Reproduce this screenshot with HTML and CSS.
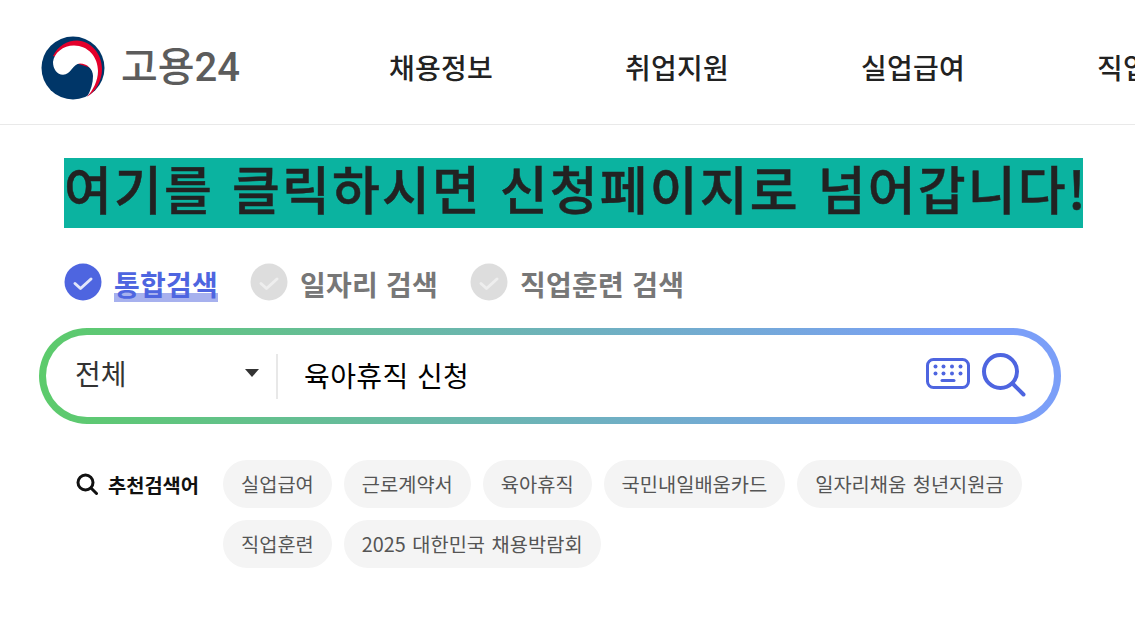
FILE: index.html
```html
<!DOCTYPE html>
<html lang="ko">
<head>
  <meta charset="UTF-8">
  <meta name="viewport" content="width=device-width, initial-scale=1.0">
  <title>고용24</title>
  <link rel="stylesheet" href="styles.css">
</head>
<body>
  <header class="site-header">
    <a class="logo" href="#">
      <svg class="logo-mark" viewBox="0 0 64 64" aria-hidden="true">
        <circle cx="32" cy="32" r="31.500" fill="#003668"/>
        <path fill="#e4002b" d="M12 20C17 10 26 4.500 36 4.500C50 5 61 18 61 33C61 45 55 55 46 61C52 52 57 44 57 34Z"/>
        <path fill="#fff" d="M12 26C13 17 22 9.500 33 9.500C47 9.500 57 21 57 35C57 45 52 54 46 61C50 54 52 47 52 40C52 33 46 27.500 39 27.500C32 27.500 30 38.700 22 38.700C16 38.700 12 33 12 26Z"/>
      </svg>
      <span class="logo-text">고용24</span>
    </a>
    <nav class="main-nav">
      <a href="#">채용정보</a>
      <a href="#">취업지원</a>
      <a href="#">실업급여</a>
      <a href="#">직업능력개발</a>
    </nav>
  </header>

  <main class="content">
    <a class="banner" href="#">여기를 클릭하시면 신청페이지로 넘어갑니다!</a>

    <div class="search-types">
      <div class="search-type active">
        <svg class="check" viewBox="0 0 38 38" aria-hidden="true">
          <circle cx="19" cy="19" r="18.500"/>
          <path d="M11 20.500l5.500 5 10.500-9.500"/>
        </svg>
        <span>통합검색</span>
      </div>
      <div class="search-type">
        <svg class="check" viewBox="0 0 38 38" aria-hidden="true">
          <circle cx="19" cy="19" r="18.500"/>
          <path d="M11 20.500l5.500 5 10.500-9.500"/>
        </svg>
        <span>일자리 검색</span>
      </div>
      <div class="search-type">
        <svg class="check" viewBox="0 0 38 38" aria-hidden="true">
          <circle cx="19" cy="19" r="18.500"/>
          <path d="M11 20.500l5.500 5 10.500-9.500"/>
        </svg>
        <span>직업훈련 검색</span>
      </div>
    </div>

    <div class="search-box">
      <div class="search-inner">
        <div class="category">
          <span>전체</span>
          <i class="arrow"></i>
        </div>
        <div class="query">육아휴직 신청</div>
        <svg class="icon-keyboard" viewBox="0 0 44 32" aria-hidden="true">
          <rect x="1.500" y="1.500" width="41" height="28" rx="6"/>
          <g class="keys">
            <circle cx="9.500" cy="8.500" r="2"/><circle cx="17.500" cy="8.500" r="2"/><circle cx="26" cy="8.500" r="2"/><circle cx="34.500" cy="8.500" r="2"/>
            <circle cx="9.500" cy="15.500" r="2"/><circle cx="17.500" cy="15.500" r="2"/><circle cx="26" cy="15.500" r="2"/><circle cx="34.500" cy="15.500" r="2"/>
          </g>
          <path d="M16 22.500h12"/>
        </svg>
        <svg class="icon-search" viewBox="0 0 44 44" aria-hidden="true">
          <circle cx="18.500" cy="18.500" r="16.500"/>
          <path d="M30.500 30.500L41.500 41.500"/>
        </svg>
      </div>
    </div>

    <div class="recommend">
      <div class="recommend-title">
        <svg viewBox="0 0 22 22" aria-hidden="true">
          <circle cx="9.500" cy="9.500" r="7.500"/>
          <path d="M15 15l5.500 5.500"/>
        </svg>
        <strong>추천검색어</strong>
      </div>
      <ul class="keywords">
        <li>실업급여</li>
        <li>근로계약서</li>
        <li>육아휴직</li>
        <li>국민내일배움카드</li>
        <li>일자리채움 청년지원금</li>
        <li>직업훈련</li>
        <li>2025 대한민국 채용박람회</li>
      </ul>
    </div>
  </main>
</body>
</html>
```

FILE: styles.css
```css
html, body {
  height: 100%;
}

body {
  margin: 0;
  overflow: hidden;
  background: #fff;
  color: #222;
  font-family: "Noto Sans CJK KR", "Noto Sans", sans-serif;
}

a {
  color: inherit;
  text-decoration: none;
}

.site-header {
  display: flex;
  align-items: center;
  height: 125px;
  padding: 12px 0 0 41px;
  box-sizing: border-box;
  border-bottom: 1px solid #e9e9e9;
  white-space: nowrap;
}

.logo {
  display: flex;
  align-items: center;
  gap: 16px;
  width: 348px;
  flex-shrink: 0;
}

.logo-mark {
  width: 64px;
  height: 64px;
}

.logo-text {
  color: #5c5c5c;
  font-family: Roboto, "Noto Sans CJK KR", sans-serif;
  font-size: 40px;
  font-weight: 500;
  line-height: 1;
}

.main-nav {
  display: flex;
  gap: 132px;
  padding-bottom: 2px;
  font-size: 28px;
  font-weight: 500;
  letter-spacing: 0.24px;
}

.content {
  padding: 33px 0 0 39px;
}

.banner {
  display: block;
  width: 1019px;
  height: 70px;
  margin-left: 25px;
  background: #0bb3a0;
  color: #222;
  font-size: 52px;
  font-weight: 500;
  letter-spacing: 2.16px;
  word-spacing: 1.2px;
  line-height: 60px;
  white-space: nowrap;
  -webkit-text-stroke: 0.5px #222;
}

.search-types {
  display: flex;
  gap: 32px;
  margin: 35px 0 0 25px;
}

.search-type {
  display: flex;
  align-items: flex-start;
  gap: 12px;
  color: #777;
  font-size: 28px;
  font-weight: 700;
  letter-spacing: 0.24px;
  line-height: 36px;
}

.search-type span {
  padding-top: 3px;
}

.check {
  width: 38px;
  height: 38px;
}

.check circle {
  fill: #ddd;
}

.check path {
  fill: none;
  stroke: #eee;
  stroke-width: 3;
  stroke-linecap: round;
  stroke-linejoin: round;
}

.search-type.active {
  color: #4e65e0;
}

.search-type.active .check circle {
  fill: #4e65e0;
}

.search-type.active .check path {
  stroke: #e2e6fa;
}

.search-type.active span {
  background: linear-gradient(#a7b1ee, #a7b1ee) no-repeat 0 100% / 100% 9px;
}

.search-box {
  width: 1022px;
  height: 96px;
  margin-top: 26px;
  padding: 7px;
  box-sizing: border-box;
  border-radius: 48px;
  background: linear-gradient(90deg, #5ccb6b, #7b9ff8 90%);
}

.search-inner {
  display: flex;
  align-items: center;
  height: 100%;
  padding: 0 28px 0 29px;
  border-radius: 41px;
  background: #fff;
}

.category {
  display: flex;
  align-items: center;
  justify-content: space-between;
  width: 203px;
  height: 45px;
  padding: 0 17px 6px 0;
  box-sizing: border-box;
  border-right: 2px solid #e8e8e8;
  color: #333;
  font-size: 28px;
}

.arrow {
  width: 0;
  height: 0;
  border-top: 8px solid #333;
  border-left: 7px solid transparent;
  border-right: 7px solid transparent;
}

.query {
  flex: 1;
  padding: 0 0 2px 26px;
  color: #000;
  font-size: 28px;
  letter-spacing: 0.4px;
}

.icon-keyboard {
  width: 44px;
  height: 32px;
  margin: 0 12px 5px 0;
  fill: none;
  stroke: #4e65e0;
  stroke-width: 3;
  stroke-linecap: round;
}

.icon-keyboard .keys {
  fill: #4e65e0;
  stroke: none;
}

.icon-search {
  width: 44px;
  height: 44px;
  margin-bottom: 2px;
  fill: none;
  stroke: #4e65e0;
  stroke-width: 4;
  stroke-linecap: round;
}

.recommend {
  display: flex;
  margin-top: 36px;
}

.recommend-title {
  display: flex;
  align-items: center;
  gap: 10px;
  width: 184px;
  height: 48px;
  padding-left: 37px;
  box-sizing: border-box;
  flex-shrink: 0;
  color: #111;
  font-size: 19.8px;
}

.recommend-title svg {
  width: 22px;
  height: 22px;
  fill: none;
  stroke: #111;
  stroke-width: 3;
  stroke-linecap: round;
}

.keywords {
  display: flex;
  flex-wrap: wrap;
  gap: 12px;
  width: 810px;
  margin: 0;
  padding: 0;
  list-style: none;
}

.keywords li {
  height: 48px;
  padding: 0 18px;
  border-radius: 24px;
  background: #f4f4f4;
  color: #555;
  font-size: 19.8px;
  word-spacing: 1px;
  line-height: 48px;
}
```
